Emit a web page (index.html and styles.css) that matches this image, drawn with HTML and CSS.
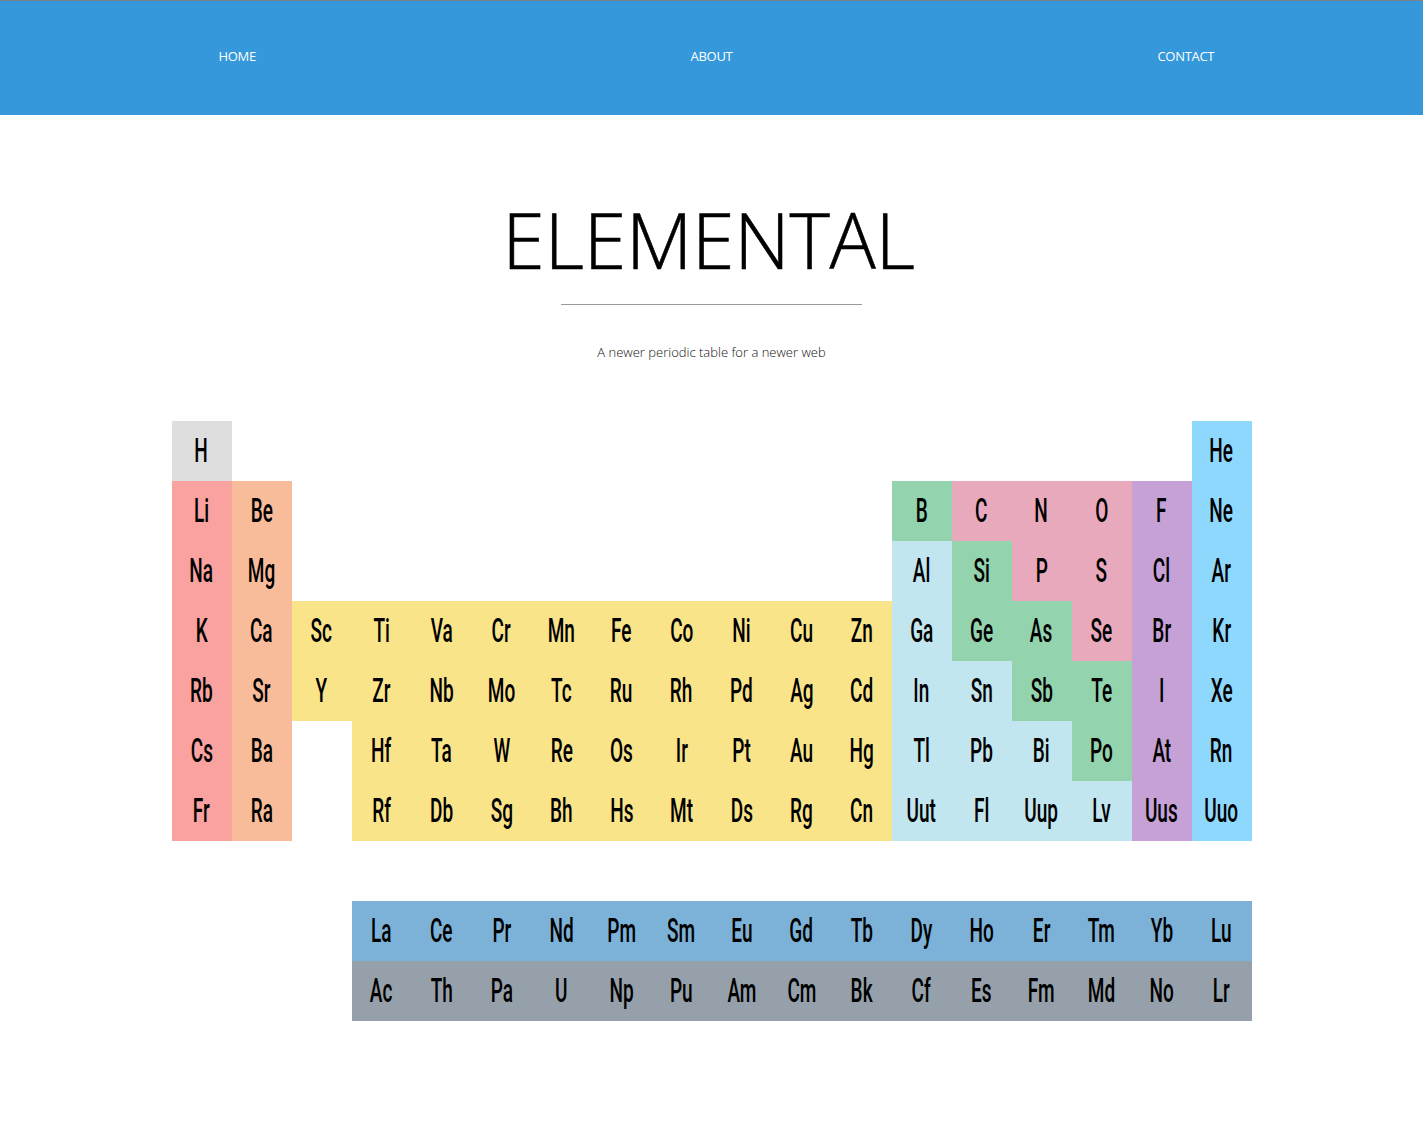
FILE: index.html
```html
<!DOCTYPE html>
<html>
<head>
<meta charset="utf-8">
<title>Elemental</title>
<link rel="stylesheet" href="styles.css">
</head>
<body>
<nav class="nav">
  <a class="nav-link" href="#">HOME</a>
  <a class="nav-link" href="#">ABOUT</a>
  <a class="nav-link" href="#">CONTACT</a>
</nav>
<header class="hero">
  <h1 class="title">ELEMENTAL</h1>
  <hr class="rule">
  <p class="subtitle">A newer periodic table for a newer web</p>
</header>
<main class="table">
  <div class="cell hyd"><span>H</span></div>
  <div class="gap16"></div>
  <div class="cell noble"><span>He</span></div>

  <div class="cell alk"><span>Li</span></div>
  <div class="cell ear"><span>Be</span></div>
  <div class="gap10"></div>
  <div class="cell met"><span>B</span></div>
  <div class="cell non"><span>C</span></div>
  <div class="cell non"><span>N</span></div>
  <div class="cell non"><span>O</span></div>
  <div class="cell hal"><span>F</span></div>
  <div class="cell noble"><span>Ne</span></div>

  <div class="cell alk"><span>Na</span></div>
  <div class="cell ear"><span>Mg</span></div>
  <div class="gap10"></div>
  <div class="cell post"><span>Al</span></div>
  <div class="cell met"><span>Si</span></div>
  <div class="cell non"><span>P</span></div>
  <div class="cell non"><span>S</span></div>
  <div class="cell hal"><span>Cl</span></div>
  <div class="cell noble"><span>Ar</span></div>

  <div class="cell alk"><span>K</span></div>
  <div class="cell ear"><span>Ca</span></div>
  <div class="cell tr"><span>Sc</span></div>
  <div class="cell tr"><span>Ti</span></div>
  <div class="cell tr"><span>Va</span></div>
  <div class="cell tr"><span>Cr</span></div>
  <div class="cell tr"><span>Mn</span></div>
  <div class="cell tr"><span>Fe</span></div>
  <div class="cell tr"><span>Co</span></div>
  <div class="cell tr"><span>Ni</span></div>
  <div class="cell tr"><span>Cu</span></div>
  <div class="cell tr"><span>Zn</span></div>
  <div class="cell post"><span>Ga</span></div>
  <div class="cell met"><span>Ge</span></div>
  <div class="cell met"><span>As</span></div>
  <div class="cell non"><span>Se</span></div>
  <div class="cell hal"><span>Br</span></div>
  <div class="cell noble"><span>Kr</span></div>

  <div class="cell alk"><span>Rb</span></div>
  <div class="cell ear"><span>Sr</span></div>
  <div class="cell tr"><span>Y</span></div>
  <div class="cell tr"><span>Zr</span></div>
  <div class="cell tr"><span>Nb</span></div>
  <div class="cell tr"><span>Mo</span></div>
  <div class="cell tr"><span>Tc</span></div>
  <div class="cell tr"><span>Ru</span></div>
  <div class="cell tr"><span>Rh</span></div>
  <div class="cell tr"><span>Pd</span></div>
  <div class="cell tr"><span>Ag</span></div>
  <div class="cell tr"><span>Cd</span></div>
  <div class="cell post"><span>In</span></div>
  <div class="cell post"><span>Sn</span></div>
  <div class="cell met"><span>Sb</span></div>
  <div class="cell met"><span>Te</span></div>
  <div class="cell hal"><span>I</span></div>
  <div class="cell noble"><span>Xe</span></div>

  <div class="cell alk"><span>Cs</span></div>
  <div class="cell ear"><span>Ba</span></div>
  <div class="gap1"></div>
  <div class="cell tr"><span>Hf</span></div>
  <div class="cell tr"><span>Ta</span></div>
  <div class="cell tr"><span>W</span></div>
  <div class="cell tr"><span>Re</span></div>
  <div class="cell tr"><span>Os</span></div>
  <div class="cell tr"><span>Ir</span></div>
  <div class="cell tr"><span>Pt</span></div>
  <div class="cell tr"><span>Au</span></div>
  <div class="cell tr"><span>Hg</span></div>
  <div class="cell post"><span>Tl</span></div>
  <div class="cell post"><span>Pb</span></div>
  <div class="cell post"><span>Bi</span></div>
  <div class="cell met"><span>Po</span></div>
  <div class="cell hal"><span>At</span></div>
  <div class="cell noble"><span>Rn</span></div>

  <div class="cell alk"><span>Fr</span></div>
  <div class="cell ear"><span>Ra</span></div>
  <div class="gap1"></div>
  <div class="cell tr"><span>Rf</span></div>
  <div class="cell tr"><span>Db</span></div>
  <div class="cell tr"><span>Sg</span></div>
  <div class="cell tr"><span>Bh</span></div>
  <div class="cell tr"><span>Hs</span></div>
  <div class="cell tr"><span>Mt</span></div>
  <div class="cell tr"><span>Ds</span></div>
  <div class="cell tr"><span>Rg</span></div>
  <div class="cell tr"><span>Cn</span></div>
  <div class="cell post"><span>Uut</span></div>
  <div class="cell post"><span>Fl</span></div>
  <div class="cell post"><span>Uup</span></div>
  <div class="cell post"><span>Lv</span></div>
  <div class="cell hal"><span>Uus</span></div>
  <div class="cell noble"><span>Uuo</span></div>

  <div class="gaprow"></div>

  <div class="gap3"></div>
  <div class="cell lan"><span>La</span></div>
  <div class="cell lan"><span>Ce</span></div>
  <div class="cell lan"><span>Pr</span></div>
  <div class="cell lan"><span>Nd</span></div>
  <div class="cell lan"><span>Pm</span></div>
  <div class="cell lan"><span>Sm</span></div>
  <div class="cell lan"><span>Eu</span></div>
  <div class="cell lan"><span>Gd</span></div>
  <div class="cell lan"><span>Tb</span></div>
  <div class="cell lan"><span>Dy</span></div>
  <div class="cell lan"><span>Ho</span></div>
  <div class="cell lan"><span>Er</span></div>
  <div class="cell lan"><span>Tm</span></div>
  <div class="cell lan"><span>Yb</span></div>
  <div class="cell lan"><span>Lu</span></div>

  <div class="gap3"></div>
  <div class="cell act"><span>Ac</span></div>
  <div class="cell act"><span>Th</span></div>
  <div class="cell act"><span>Pa</span></div>
  <div class="cell act"><span>U</span></div>
  <div class="cell act"><span>Np</span></div>
  <div class="cell act"><span>Pu</span></div>
  <div class="cell act"><span>Am</span></div>
  <div class="cell act"><span>Cm</span></div>
  <div class="cell act"><span>Bk</span></div>
  <div class="cell act"><span>Cf</span></div>
  <div class="cell act"><span>Es</span></div>
  <div class="cell act"><span>Fm</span></div>
  <div class="cell act"><span>Md</span></div>
  <div class="cell act"><span>No</span></div>
  <div class="cell act"><span>Lr</span></div>
</main>
</body>
</html>
```
FILE: styles.css
```css
html, body {
  margin: 0;
  padding: 0;
  background: #ffffff;
}
body {
  font-family: "Open Sans", "Liberation Sans", sans-serif;
  color: #000;
}
.nav {
  display: grid;
  grid-template-columns: 1fr 1fr 1fr;
  align-items: center;
  height: 114px;
  background: #3598db;
  border-top: 1px solid #7a8088;
}
.nav-link {
  justify-self: center;
  color: #ffffff;
  text-decoration: none;
  font-family: "Open Sans", sans-serif;
  font-size: 13px;
  font-weight: 400;
  letter-spacing: -0.3px;
  margin-top: -5px;
}
.hero {
  display: flex;
  flex-direction: column;
  align-items: center;
  padding-top: 82px;
}
.title {
  margin: 0 0 0 -6px;
  font-family: "Open Sans", sans-serif;
  font-weight: 300;
  font-size: 77px;
  line-height: 86px;
  letter-spacing: -0.3px;
  color: #000;
  -webkit-text-stroke: 0.6px #000;
}
.rule {
  width: 301px;
  height: 0;
  margin: 21px 0 0 0;
  border: 0;
  border-top: 1px solid #9a9a9a;
}
.subtitle {
  margin: 38px 0 0 0;
  font-family: "Open Sans", sans-serif;
  font-weight: 300;
  font-size: 13px;
  line-height: 18px;
  letter-spacing: 0;
  color: #111;
}
.table {
  display: grid;
  grid-template-columns: repeat(18, 60px);
  grid-auto-rows: 60px;
  justify-content: center;
  margin-top: 60px;
  padding-bottom: 110px;
}
.gap16 { grid-column: span 16; }
.gap10 { grid-column: span 10; }
.gap3 { grid-column: span 3; }
.gap1 { grid-column: span 1; }
.gaprow { grid-column: span 18; }
.cell {
  display: flex;
  align-items: center;
  justify-content: center;
  overflow: hidden;
}
.cell span {
  display: inline-block;
  font-family: "Roboto", "Liberation Sans", sans-serif;
  font-weight: 500;
  font-size: 34px;
  line-height: 1;
  transform: scaleX(0.56);
  color: #000;
  margin-top: -3px;
}
.hyd { background: #dedede; }
.alk { background: #f9a2a0; }
.ear { background: #f9bc9a; }
.tr { background: #fae48a; }
.post { background: #c1e6ef; }
.met { background: #93d3ae; }
.non { background: #e8a9bd; }
.hal { background: #c6a1d6; }
.noble { background: #8fd8fd; }
.lan { background: #7cb2d7; }
.act { background: #95a0aa; }
```
